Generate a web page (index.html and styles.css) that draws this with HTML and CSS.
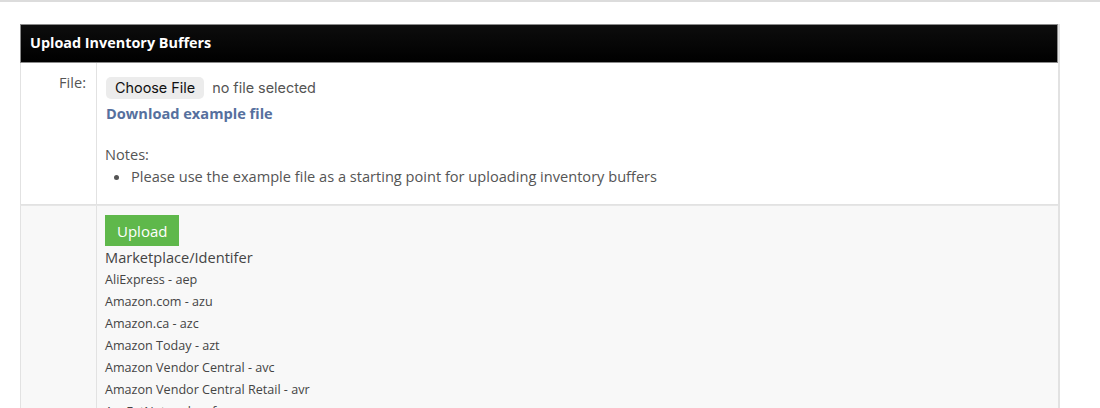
FILE: index.html
```html
<!DOCTYPE html>
<html lang="en">
<head>
    <meta charset="UTF-8">
    <meta name="viewport" content="width=device-width, initial-scale=1.0">
    <title>Upload Inventory Buffers</title>
    <link rel="stylesheet" href="styles.css">
</head>
<body>

    <div class="top-rule"></div>

    <!-- Upload Panel -->
    <div class="panel">
        <div class="panel-header">Upload Inventory Buffers</div>

        <div class="form-row">
            <div class="form-label">File:</div>
            <div class="form-field">
                <div class="file-input">
                    <span class="file-button">Choose File</span>
                    <span class="file-name">no file selected</span>
                </div>
                <a class="example-link" href="#">Download example file</a>

                <div class="notes">
                    <div class="notes-title">Notes:</div>
                    <ul>
                        <li>Please use the example file as a starting point for uploading inventory buffers</li>
                    </ul>
                </div>
            </div>
        </div>

        <div class="form-row shaded">
            <div class="form-label"></div>
            <div class="form-field compact">
                <button class="upload-button">Upload</button>
                <div class="market-title">Marketplace/Identifer</div>
                <div class="market-list">
                    <div>AliExpress - aep</div>
                    <div>Amazon.com - azu</div>
                    <div>Amazon.ca - azc</div>
                    <div>Amazon Today - azt</div>
                    <div>Amazon Vendor Central - avc</div>
                    <div>Amazon Vendor Central Retail - avr</div>
                    <div>AvaFatNetwork - afn</div>
                </div>
            </div>
        </div>
    </div>

</body>
</html>
```

FILE: styles.css
```css
/* General Body Styling */
body {
    font-family: "Open Sans", Arial, sans-serif;
    font-size: 14.6px;
    color: #444;
    background-color: #fff;
    margin: 0;
    padding: 0;
}

.top-rule {
    height: 2px;
    background-color: #dcdcdc;
}

/* Panel */
.panel {
    width: 1040px;
    margin: 22px 0 0 20px;
    border-right: 2px solid #e2e2e2;
    box-sizing: border-box;
}

.panel-header {
    background: linear-gradient(#0d0d0d, #000);
    color: #fff;
    font-weight: bold;
    font-size: 14.4px;
    line-height: 20px;
    padding: 8px 10px 9px 9px;
    border: 1px solid #8a8a8a;
}

/* Form Rows */
.form-row {
    display: flex;
    border-left: 1px solid #e2e2e2;
    border-bottom: 1px solid #e2e2e2;
}

.form-row.shaded {
    background-color: #f8f8f8;
    border-top: 1px solid #e6e6e6;
}

.form-label {
    width: 76px;
    flex-shrink: 0;
    box-sizing: border-box;
    text-align: right;
    padding: 9px 10px 0 0;
    line-height: 20px;
    color: #555;
    border-right: 1px solid #e2e2e2;
}

.form-field {
    padding: 14px 8px 18px 8px;
    line-height: 20px;
}

.form-field.compact {
    padding-top: 9px;
    padding-bottom: 0;
}

/* Fake file input */
.file-input {
    display: flex;
    align-items: center;
    gap: 8px;
    font-family: Inter, "Noto Sans", sans-serif;
    font-size: 14.4px;
}

.file-button {
    background-color: #ececec;
    color: #111;
    border-radius: 5px;
    padding: 1px 9px;
    margin-left: 1px;
    line-height: 20px;
}

.file-name {
    color: #555;
}

.example-link {
    display: block;
    margin-top: 4px;
    margin-left: 1px;
    color: #56709e;
    font-weight: bold;
    text-decoration: none;
}

/* Notes */
.notes {
    margin-top: 21px;
    color: #555;
}

.notes ul {
    margin: 2px 0 0 0;
    padding-left: 26px;
}

.notes li {
    line-height: 20px;
}

/* Upload section */
.upload-button {
    background-color: #5fb84b;
    color: #fff;
    border: none;
    font-family: "Open Sans", Arial, sans-serif;
    font-size: 15px;
    height: 31px;
    padding: 0 12px;
    cursor: pointer;
    display: block;
}

.market-title {
    margin-top: 1px;
    font-size: 14.6px;
    line-height: 20px;
    color: #444;
}

.market-list {
    margin-top: 2px;
}

.market-list div {
    font-size: 12.6px;
    line-height: 22px;
}
```
